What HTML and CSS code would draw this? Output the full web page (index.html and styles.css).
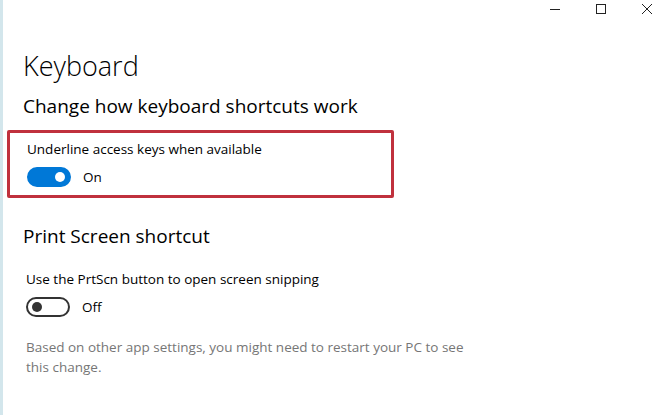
FILE: index.html
```html
<!DOCTYPE html>
<html lang="en">
  <head>
    <meta charset="UTF-8" />
    <meta name="viewport" content="width=device-width, initial-scale=1.0" />
    <title>Keyboard</title>
    <link rel="stylesheet" href="styles.css">
  </head>
  <body>
    <div class="window">
      <div class="titlebar">
        <span class="ctl">
          <svg width="12" height="12" viewBox="0 0 12 12"><path d="M1 6.5h10" stroke="#222" stroke-width="1"/></svg>
        </span>
        <span class="ctl">
          <svg width="12" height="12" viewBox="0 0 12 12"><rect x="1.5" y="1.5" width="9" height="9" fill="none" stroke="#222" stroke-width="1"/></svg>
        </span>
        <span class="ctl">
          <svg width="12" height="12" viewBox="0 0 12 12"><path d="M1 1l10 10M11 1L1 11" stroke="#222" stroke-width="1"/></svg>
        </span>
      </div>
      <main class="content">
        <h1>Keyboard</h1>
        <h2>Change how keyboard shortcuts work</h2>
        <div class="highlight">
          <div class="label">Underline access keys when available</div>
          <div class="toggle-row">
            <span class="toggle on"><span class="knob"></span></span>
            <span>On</span>
          </div>
        </div>
        <h2 class="section">Print Screen shortcut</h2>
        <div class="setting">
          <div class="label">Use the PrtScn button to open screen snipping</div>
          <div class="toggle-row">
            <span class="toggle"><span class="knob"></span></span>
            <span>Off</span>
          </div>
        </div>
        <p class="note">Based on other app settings, you might need to restart your PC to see this change.</p>
      </main>
    </div>
  </body>
</html>
```

FILE: styles.css
```css
* { box-sizing: border-box; }
html, body { margin: 0; height: 100%; }
body { font-family: "Open Sans", "Noto Sans", sans-serif; color: #000; background: #fff; }
.window { height: 100%; border-left: 3px solid #d3e6ec; }
.titlebar { display: flex; justify-content: flex-end; gap: 34px; height: 30px; padding: 3px 12px 0 0; }
.ctl { display: flex; align-items: center; justify-content: center; width: 12px; height: 12px; }
.content { padding-left: 20px; }
h1 { margin: 18px 0 0; font-size: 27px; font-weight: 300; line-height: 36px; }
h2 { margin: 8px 0 0; font-size: 19px; font-weight: 400; line-height: 28px; }
.highlight { width: 387px; margin: 10px 0 0 -16px; padding: 6px 0 8px 17px; border: 3px solid #c0313d; border-radius: 2px; }
.label { font-size: 13.5px; line-height: 20px; }
.toggle-row { display: flex; align-items: center; gap: 12px; margin-top: 8px; font-size: 13.5px; }
.toggle { display: flex; align-items: center; width: 44px; height: 20px; padding: 0 4px; border: 2px solid #333; border-radius: 10px; }
.toggle .knob { width: 10px; height: 10px; border-radius: 50%; background: #333; }
.toggle.on { justify-content: flex-end; border-color: #0078d7; background: #0078d7; }
.toggle.on .knob { background: #fff; }
h2.section { margin-top: 24px; }
.setting { margin-top: 19px; padding-left: 3px; }
.note { width: 445px; margin: 20px 0 0 3px; font-size: 13.5px; line-height: 20px; color: #767676; }
```
